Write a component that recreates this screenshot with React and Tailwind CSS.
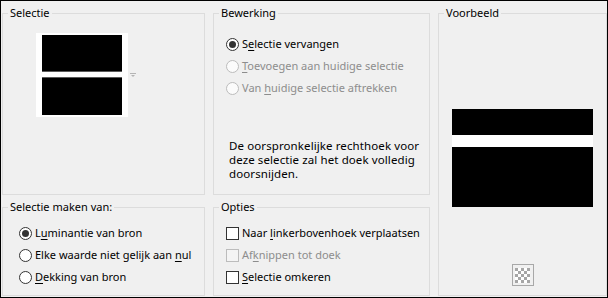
import React from "react";

function Radio({ checked, disabled, children }) {
  return (
    <div className="flex h-[22px] items-center whitespace-nowrap">
      <span
        className={
          disabled
            ? "flex h-[13px] w-[13px] shrink-0 items-center justify-center rounded-full border border-[#bcbcbc] bg-[#fbfbfb]"
            : "flex h-[13px] w-[13px] shrink-0 items-center justify-center rounded-full border border-[#333333] bg-white"
        }
      >
        {checked && <span className="h-[7px] w-[7px] rounded-full bg-[#333333]" />}
      </span>
      <span className={disabled ? "ml-[3px] text-[#8d8d8d]" : "ml-[3px] text-black"}>{children}</span>
    </div>
  );
}

function Check({ disabled, children }) {
  return (
    <div className="flex h-[22px] items-center whitespace-nowrap">
      <span
        className={
          disabled
            ? "h-[13px] w-[13px] shrink-0 border border-[#bcbcbc] bg-[#f4f4f4]"
            : "h-[13px] w-[13px] shrink-0 border border-[#333333] bg-white"
        }
      />
      <span className={disabled ? "ml-[3px] text-[#8d8d8d]" : "ml-[3px] text-black"}>{children}</span>
    </div>
  );
}

function Group({ title, className, children }) {
  return (
    <fieldset className={"min-w-0 border border-[#dcdcdc] " + className}>
      <legend className="ml-[5px] whitespace-nowrap px-[2px] leading-[16px] text-black">{title}</legend>
      {children}
    </fieldset>
  );
}

function U({ children }) {
  return <span className="underline decoration-1 underline-offset-[2px]">{children}</span>;
}

export default function App() {
  return (
    <div className="h-[298px] w-[608px] overflow-hidden border border-black bg-[#f0f0f0] font-['Noto_Sans',sans-serif] text-[11px]">
      <div className="grid grid-cols-[203px_217px_1fr] grid-rows-[190px_97px] gap-x-[8px] gap-y-[4px] pl-[1px] pr-[0px] pt-[4px]">
        <Group title="Selectie" className="col-start-1 row-start-1">
          <div className="ml-[33px] mt-[12px] flex items-center">
            <div className="flex h-[84px] w-[92px] flex-col bg-white px-[6px] pt-[2px]">
              <div className="h-[36px] bg-black" />
              <div className="h-[1px] bg-[#5a5a5a]" />
              <div className="h-[5px]" />
              <div className="h-[1px] bg-[#5a5a5a]" />
              <div className="h-[37px] bg-black" />
            </div>
            <svg width="6" height="5" viewBox="0 0 6 5" className="ml-[2px]">
              <rect x="0" y="0" width="6" height="1" fill="#b4b4b4" />
              <polygon points="1,2 5,2 3,4" fill="#b4b4b4" />
            </svg>
          </div>
        </Group>

        <Group title="Bewerking" className="col-start-2 row-start-1">
          <div className="pl-[12px] pt-[12px]">
            <Radio checked>
              S<U>e</U>lectie vervangen
            </Radio>
            <Radio disabled>
              <U>T</U>oevoegen aan huidige selectie
            </Radio>
            <Radio disabled>
              Van <U>h</U>uidige selectie aftrekken
            </Radio>
          </div>
          <p className="ml-[15px] mt-[40px] whitespace-nowrap text-[11.5px] leading-[14px] tracking-[0.1px] text-black">
            De oorspronkelijke rechthoek voor
            <br />
            deze selectie zal het doek volledig
            <br />
            doorsnijden.
          </p>
        </Group>

        <Group title="Voorbeeld" className="col-start-3 row-span-2 row-start-1">
          <div className="flex flex-col items-center">
            <div className="mt-[88px] flex w-[141px] flex-col">
              <div className="h-[26px] bg-black" />
              <div className="h-[12px] bg-white" />
              <div className="h-[60px] bg-black" />
            </div>
            <div className="mt-[57px] flex h-[22px] w-[22px] items-center justify-center border border-[#a8a8a8] bg-[#f0f0f0]">
              <svg width="15" height="15" viewBox="0 0 15 15">
                <rect width="15" height="15" fill="#ffffff" />
                {[0, 1, 2, 3, 4].map((r) =>
                  [0, 1, 2, 3, 4].map((c) =>
                    (r + c) % 2 === 0 ? (
                      <rect key={r + "-" + c} x={c * 3} y={r * 3} width="3" height="3" fill="#a6a6a6" />
                    ) : null
                  )
                )}
              </svg>
            </div>
          </div>
        </Group>

        <Group title="Selectie maken van:" className="col-start-1 row-start-2">
          <div className="pl-[16px] pt-[7px]">
            <Radio checked>
              L<U>u</U>minantie van bron
            </Radio>
            <Radio>
              Elke waarde niet gelijk aan <U>n</U>ul
            </Radio>
            <Radio>
              <U>D</U>ekking van bron
            </Radio>
          </div>
        </Group>

        <Group title="Opties" className="col-start-2 row-start-2">
          <div className="pl-[12px] pt-[7px]">
            <Check>
              Naar <U>l</U>inkerbovenhoek verplaatsen
            </Check>
            <Check disabled>
              Af<U>k</U>nippen tot doek
            </Check>
            <Check>
              <U>S</U>electie omkeren
            </Check>
          </div>
        </Group>
      </div>
    </div>
  );
}
